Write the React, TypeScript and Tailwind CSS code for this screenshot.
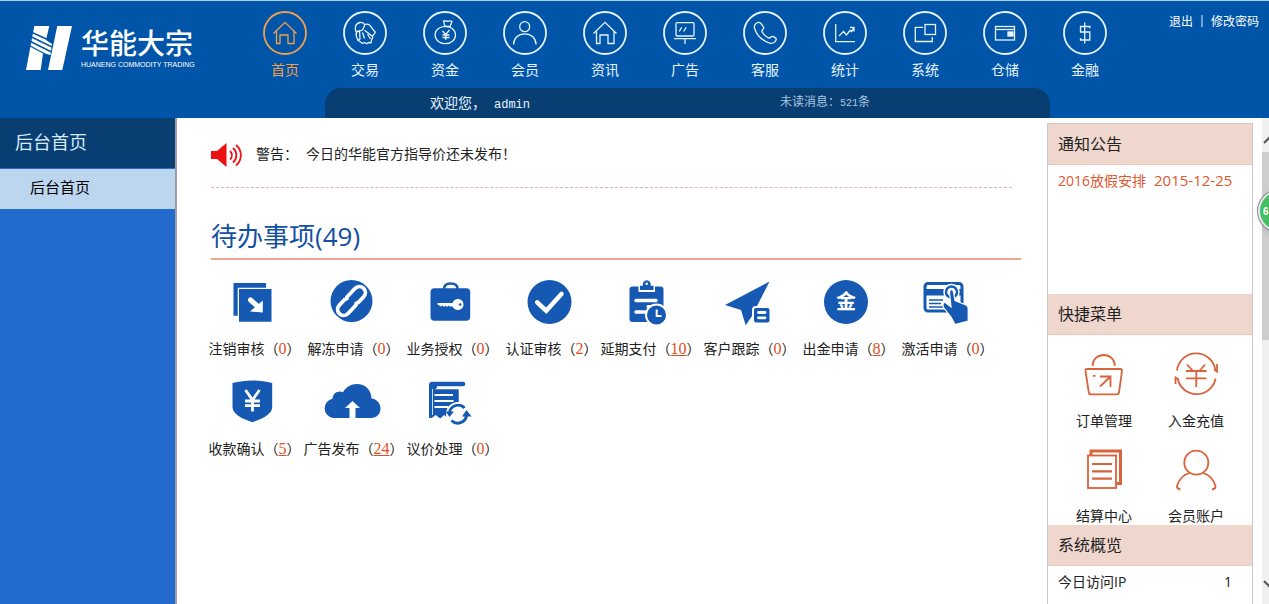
import type { ReactNode } from "react";

const NAV_ITEMS: { label: string; icon: ReactNode }[] = [
  {
    label: "首页",
    icon: <HouseShape />,
  },
  {
    label: "交易",
    icon: (
      <>
        <path d="M13 20.500c-1.500-3.500-.8-8 4-9 2.500-.3 4 .5 4.800 2.300l-2 5-4 1.500-3 .7" />
        <path d="M21.500 13.500c2-.6 4-.2 5.500 1l5.300 6.800-2.800 4-8-6M13.500 20.500l3-.5.5 8-2 1.500c-1.500-2.500-2.200-6-1.500-9z" />
        <path d="M15.500 29.500l4 3 2-1 2 1.300 2-1.300 2.500.3.500-2.500 1.500-3.500M19.500 21.500l2 6M24.500 23l3 5" />
      </>
    ),
  },
  {
    label: "资金",
    icon: (
      <>
        <path d="M20.500 10c2-.8 3.500.5 5 .2 1.500-.4 2.800-.2 3.500.3l-2 5h-5z" />
        <ellipse cx="22.300" cy="24" rx="10.200" ry="8.700" />
        <path d="M19.500 20l3.300 3.500L26.500 19M22.800 23.500V29M19.500 24h7M19.500 26.500h7" />
      </>
    ),
  },
  {
    label: "会员",
    icon: (
      <>
        <circle cx="21.700" cy="15.700" r="5" />
        <path d="M10.500 33.500c.3-6.500 4.800-10.600 11.300-10.600s11 4.100 11.300 10.600" />
      </>
    ),
  },
  {
    label: "资讯",
    icon: <HouseShape />,
  },
  {
    label: "广告",
    icon: (
      <>
        <rect x="13" y="11.700" width="18" height="13.300" rx="1" />
        <path d="M11 27.700h22M22 27.700V33M16.300 20.500l2.400-4.200M20.500 20.500l2.800-4.200" />
      </>
    ),
  },
  {
    label: "客服",
    icon: (
      <path d="M13 12.500c2-1.500 3.500-1.500 5 0l2.300 3c.8 1.300.5 2-.5 3-1.200 1-1.200 1.500-.3 3 1.500 2.500 3.500 4 5.500 5.200 1 .5 1.800.5 2.700-.5 1-1 2-1 3.200-.3l1.500 1c1.200.8.9 2 .2 3-1.500 2.400-3.300 3-6 2.300C19 29.500 13.500 23.500 11.600 17.500 11 15.500 11.500 13.800 13 12.500z" />
    ),
  },
  {
    label: "统计",
    icon: <path d="M12.700 13v17.700H32M16 25l4.500-4.500 3 3.500 3.500-4.500 1.500 1L31 17M27 16.500h4v4" />,
  },
  {
    label: "系统",
    icon: (
      <>
        <rect x="22" y="13.500" width="10.500" height="10" />
        <path d="M20 16.300h-7.700v14.200h17V26" />
      </>
    ),
  },
  {
    label: "仓储",
    icon: (
      <>
        <rect x="12.500" y="15.500" width="19" height="13.500" />
        <path d="M12.500 18.500h19" />
        <rect x="25" y="21" width="5" height="4" fill="currentColor" />
      </>
    ),
  },
  {
    label: "金融",
    icon: <path d="M21.700 11.500v21M26.800 17.500v-2h-9.300V21h9.300v8h-9.300v-2" />,
  },
];

const BLUE = "#1559b3";

const TODO_ITEMS: { label: string; count: number; icon: ReactNode }[] = [
  {
    label: "注销审核",
    count: 0,
    icon: (
      <>
        <path d="M11.500 5H44v4.700H15.700v28h-4.200z" />
        <path d="M17 11h32.500v32.700H17z" />
        <path d="M28.500 22l8 7" stroke="#fff" strokeWidth="5" strokeLinecap="round" />
        <path d="M40.800 22.500v12L28 33.500z" fill="#fff" />
      </>
    ),
  },
  {
    label: "解冻申请",
    count: 0,
    icon: (
      <>
        <circle cx="30.500" cy="23" r="21" />
        <g transform="rotate(-47 30.500 23)" fill="none" stroke="#fff" strokeWidth="3.800">
          <path d="M28 17h-9a6 6 0 0 0 0 12h11c1.500 0 2.500-1 3-2.500" />
          <path d="M33 29h9a6 6 0 0 0 0-12H31c-1.500 0-2.500 1-3 2.500" />
        </g>
      </>
    ),
  },
  {
    label: "业务授权",
    count: 0,
    icon: (
      <>
        <path d="M24 11c0-4 2.500-5.500 6.800-5.500s6.800 1.500 6.800 5.500" fill="none" stroke={BLUE} strokeWidth="2.500" />
        <rect x="10.500" y="10.300" width="39.700" height="32.400" rx="4" />
        <path
          d="M17.500 25h15c1-2.500 3-4 5.500-4 3 0 5.500 2.300 5.500 5.500S41 32 38 32c-2.500 0-4.500-1.300-5.500-3.500h-3l-1-1-1.500 1.500-1.500-1.500-1.500 1.500-1.500-1.500-1.500 1-3.500-2z"
          fill="#fff"
        />
        <circle cx="40.200" cy="26.500" r="1.300" />
      </>
    ),
  },
  {
    label: "认证审核",
    count: 2,
    icon: (
      <>
        <circle cx="30.500" cy="24" r="22" />
        <path
          d="M18.200 24.300l9 8.400 15.300-16.700"
          fill="none"
          stroke="#fff"
          strokeWidth="4.500"
          strokeLinecap="round"
        />
      </>
    ),
  },
  {
    label: "延期支付",
    count: 10,
    icon: (
      <>
        <rect x="11.500" y="8.500" width="34" height="35.500" rx="3" />
        <path d="M20.500 6.500h16.500v7.500H20.500z" fill="#fff" />
        <path d="M22 7.700h3a4 4 0 1 1 7.500 0h3V12H22z" />
        <circle cx="28.700" cy="5.800" r="1.300" fill="#fff" />
        <path
          d="M18 22.500h20M18 34h9"
          stroke="#fff"
          strokeWidth="3.500"
          strokeLinecap="round"
        />
        <path d="M30 28.500h7" stroke="#fff" strokeWidth="3" strokeLinecap="round" />
        <circle cx="38.500" cy="37" r="10.500" stroke="#fff" strokeWidth="2" />
        <path d="M38.700 31.500v6.500h4.800" fill="none" stroke="#fff" strokeWidth="2" />
      </>
    ),
  },
  {
    label: "客户跟踪",
    count: 0,
    icon: (
      <>
        <path d="M52.500 3.500L8 27l16 5 4.700 15.300L35 38z" />
        <rect x="36" y="29" width="17.500" height="16.500" rx="3" stroke="#fff" strokeWidth="2" />
        <path d="M41.500 34.500H48M41.500 39.800H48" stroke="#fff" strokeWidth="2.800" strokeLinecap="round" />
      </>
    ),
  },
  {
    label: "出金申请",
    count: 8,
    icon: (
      <>
        <circle cx="30" cy="24" r="22" />
        <text
          x="30"
          y="31"
          textAnchor="middle"
          fill="#fff"
          className="font-['Noto_Sans_CJK_SC',sans-serif] text-[20px] font-bold"
        >
          金
        </text>
      </>
    ),
  },
  {
    label: "激活申请",
    count: 0,
    icon: (
      <>
        <rect x="10" y="5.500" width="37" height="27.500" rx="3" fill="#fff" stroke={BLUE} strokeWidth="3" />
        <path d="M10 11h37v6.500H10z" />
        <path d="M14 22h14M14 25.500h12M14 29h15" stroke={BLUE} strokeWidth="1.500" />
        <circle cx="36.500" cy="14" r="7.500" stroke="#fff" strokeWidth="1.500" />
        <circle cx="36.500" cy="14" r="4.300" fill="#fff" />
        <path
          d="M34.500 14c0-3 4-3 4 0l1.500 8.500 11 4.500c1.500.8 2.200 2 2.200 3.500V43l-13.200 3.500-4-7.500-7.500-9.500c-1.500-4 .5-6 2.500-4.500l5 4z"
          stroke="#fff"
          strokeWidth="1.200"
        />
      </>
    ),
  },
  {
    label: "收款确认",
    count: 5,
    icon: (
      <>
        <path d="M10.500 5c13-3.500 27-3.500 39.700 0v24c0 6-7 11-19.700 15.200C17.500 40 10.500 35 10.500 29z" />
        <path
          d="M23.500 12l7 10 7-10M30.500 22v11.500M23 23h15M23 27.700h15"
          fill="none"
          stroke="#fff"
          strokeWidth="2.800"
        />
      </>
    ),
  },
  {
    label: "广告发布",
    count: 24,
    icon: (
      <>
        <path d="M12 40a9.800 9.800 0 0 1-.5-19.300c0-5.700 6-8.700 10.500-6.500C25 9 30 6 36 6c8 0 14.500 6 14.500 14.500 5 .5 9 4.500 9 10S55.500 40 50 40z" />
        <path d="M31.500 23l7.500 7h-4.500v10.500h-6V30H24z" fill="#fff" />
      </>
    ),
  },
  {
    label: "议价处理",
    count: 0,
    icon: (
      <>
        <path d="M12 3.700h31a2.200 2.200 0 0 1 0 4.500H17c0 2-1 3-2.500 3h24.200V41l-5-3.500-4.500 3.500-5-4-4 3.500-4.500-3.500-4 3H9V7c0-2 1-3.300 3-3.300z" />
        <path d="M14.500 17H33M14.500 23h19M14.500 29h14" stroke="#fff" strokeWidth="1.800" />
        <path d="M12.500 11v26" stroke="#fff" strokeWidth=".8" />
        <circle cx="38" cy="36" r="12" fill="#fff" />
        <path
          d="M29.500 34a8.800 8.800 0 0 1 15-4M46.500 37.500a8.800 8.800 0 0 1-15 5"
          fill="none"
          stroke={BLUE}
          strokeWidth="2.800"
        />
        <path d="M25.500 33.500h8.500l-4.500 5.500zM42 38.500h9.500L46.500 32z" />
      </>
    ),
  },
];

const SHORTCUTS: { label: string; icon: ReactNode }[] = [
  {
    label: "订单管理",
    icon: (
      <>
        <path d="M12.700 15v-1a11 10 0 0 1 22 0v1" />
        <path d="M7 18h33.500c1.200 0 1.700.8 1.500 2l-3 21.500c-.2 1.200-1 1.900-2.200 1.900H11c-1.200 0-2-.7-2.200-1.900L5.500 20c-.2-1.200.3-2 1.500-2z" />
        <path d="M20 25.500h10.500V36M30.500 25.500L20 35.500M13 24.800h2.500" />
      </>
    ),
  },
  {
    label: "入金充值",
    icon: (
      <>
        <path d="M5 19.500a19.300 19.300 0 0 1 38.300-.5M43.600 27.500a19.300 19.300 0 0 1-38-.5" />
        <path d="M45 13v7.500l-3-2M3.500 33v-6.500l3 2" />
        <path d="M15 13.500l6 6.500M33 13.500L27.500 20M14 20h20.500M14 27.300h20.500M24.300 20v16" />
      </>
    ),
  },
  {
    label: "结算中心",
    icon: (
      <>
        <path d="M11 9V5h29.500v32.500h-4" strokeWidth="3" />
        <rect x="8" y="9.500" width="28" height="32.500" />
        <path d="M12 18h20M12 25.300h20M12 32.700h20" strokeWidth="2.200" />
      </>
    ),
  },
  {
    label: "会员账户",
    icon: (
      <>
        <circle cx="24.300" cy="16.700" r="12" />
        <path d="M17.500 27C12 28.500 7 33.500 5 40c-.2 1.500 1 3 3.500 3.500M31 27c5.500 1.500 10.500 6.500 12.500 13 .2 1.500-1 3-3.500 3.500" />
      </>
    ),
  },
];

function HouseShape() {
  return <path d="M10.500 22.500L22 11.300l11.500 11.200M13.500 20.500v12H17v-8.500h8v8.500h6v-12" />;
}

function Logo() {
  return (
    <div className="flex w-[245px] shrink-0 items-start pt-[25px] pl-[26px]">
      <svg width="46" height="46" viewBox="0 0 46 46" fill="#fff" aria-hidden="true">
        <path d="M8.300 0h15L20 14l6 4-1.500 11-7.500-1.500-2.300 16.500H0z" />
        <path d="M31.300 0H46l-9.700 44H22z" />
        <path
          d="M6 6.500L27 16M5.500 11L26 21M4.500 15.500L25.500 26M4 20l20 10.500"
          stroke="#0055a8"
          strokeWidth="1.400"
        />
      </svg>
      <div className="pl-[9px] whitespace-nowrap text-white">
        <div className="text-[28px] leading-8 font-medium">华能大宗</div>
        <div className="font-['Liberation_Sans',sans-serif] text-[7px] leading-[14px]">
          HUANENG COMMODITY TRADING
        </div>
      </div>
    </div>
  );
}

function Header() {
  return (
    <header className="flex border-t border-[#a5d3f3] bg-[#0055a8] text-white">
      <Logo />
      <div className="shrink-0">
        <nav className="flex pt-2.5">
          {NAV_ITEMS.map((item, i) => (
            <a
              key={item.label}
              href="#"
              className={`flex w-20 flex-col items-center gap-1 pb-2 text-sm leading-[21px] ${
                i === 0 ? "text-[#f0a050]" : "text-[#e6f3ff]"
              }`}
            >
              <svg
                width="44"
                height="44"
                viewBox="0 0 44 44"
                fill="none"
                stroke="currentColor"
                strokeWidth="1.300"
                aria-hidden="true"
              >
                <circle cx="22" cy="22" r="21" strokeWidth="1.800" />
                {item.icon}
              </svg>
              {item.label}
            </a>
          ))}
        </nav>
        <div className="ml-20 flex h-[30px] w-[725px] items-center rounded-t-2xl bg-[#093e72] pb-0.5 pl-[105px]">
          <p className="w-[350px] text-sm text-[#e6f3ff]">
            欢迎您，
            <span className="ml-2 font-['Liberation_Mono',monospace] text-xs">admin</span>
          </p>
          <p className="text-xs text-[#a9c6e2]">
            未读消息：
            <span className="font-['Liberation_Mono',monospace] text-[10px]">521</span>条
          </p>
        </div>
      </div>
      <div className="flex flex-1 items-center justify-end gap-2 self-start pt-3 pr-2.5 text-xs whitespace-nowrap">
        <a href="#">退出</a>
        <span className="h-3 w-0.5 bg-[#6f9fd0]" />
        <a href="#">修改密码</a>
      </div>
    </header>
  );
}

function Sidebar() {
  return (
    <div className="w-[177px] shrink-0 border-r-2 border-[#999fa8] bg-[#236acd]">
      <h2 className="h-[50px] bg-[#093e72] pl-[15px] text-lg leading-[46px] text-[#d8eafa]">
        后台首页
      </h2>
      <a
        href="#"
        className="mt-px block h-10 bg-[#bcd6f0] pl-[30px] text-[15px] leading-[35px] text-black"
      >
        后台首页
      </a>
    </div>
  );
}

function TodoSection() {
  return (
    <main className="min-w-0 flex-1 pr-[26px] pl-[34px]">
      <div className="mr-[9px] flex h-[70px] items-center border-b border-dashed border-[#dfb5a6] pt-1 text-sm text-[#222]">
        <svg width="32" height="26" viewBox="0 0 32 26" fill="#ee1111" aria-hidden="true">
          <path d="M0 9h6L15.500 1v24L6 17H0z" />
          <path
            d="M19 9c2.500 2.500 2.500 6 0 8.500M22 6c4.500 4 4.500 10.500 0 14.500M25 3c6.500 5.500 6.500 15 0 20.500"
            fill="none"
            stroke="#ee1111"
            strokeWidth="1.800"
          />
        </svg>
        <p className="pb-1 pl-[13px]">
          警告：<span className="ml-2">今日的华能官方指导价还未发布！</span>
        </p>
      </div>
      <h1 className="h-[72px] border-b-2 border-[#efa592] pt-[30px] font-['Open_Sans','Noto_Sans_CJK_SC',sans-serif] text-[26px] leading-9 text-[#134fa3]">
        待办事项(49)
      </h1>
      <ul className="-mx-[9px] flex flex-wrap pt-[18px]">
        {TODO_ITEMS.map((item) => (
          <li key={item.label} className="mb-5 flex w-[99px] flex-col items-center">
            <svg width="60" height="48" viewBox="0 0 60 48" fill={BLUE} aria-hidden="true">
              {item.icon}
            </svg>
            <p className="mt-3 pl-1.5 text-sm leading-5 whitespace-nowrap text-[#222]">
              {item.label}（
              <a
                href="#"
                className={`font-['Liberation_Serif',serif] text-base leading-none text-[#e04e22] ${
                  [5, 8, 10, 24].includes(item.count) ? "underline" : ""
                }`}
              >
                {item.count}
              </a>
              ）
            </p>
          </li>
        ))}
      </ul>
    </main>
  );
}

function PanelTitle({ children }: { children: ReactNode }) {
  return (
    <h2 className="h-[41px] border-b border-dotted border-[#e3bdb0] bg-[#f0d7ce] pl-2.5 text-base leading-[38px] text-[#222]">
      {children}
    </h2>
  );
}

function RightPanel() {
  return (
    <aside className="mt-[5px] w-[206px] shrink-0 border border-b-0 border-[#c8c8c8]">
      <PanelTitle>通知公告</PanelTitle>
      <div className="h-[129px] pt-[5px] pl-2.5">
        <a
          href="#"
          className="flex items-baseline gap-2 font-['Open_Sans','Noto_Sans_CJK_SC',sans-serif] text-sm leading-5 whitespace-nowrap text-[#e0562f]"
        >
          <span>2016放假安排</span>
          <span className="text-[15px]">2015-12-25</span>
        </a>
      </div>
      <PanelTitle>快捷菜单</PanelTitle>
      <div className="grid grid-cols-2 px-2.5">
        {SHORTCUTS.map((item) => (
          <a
            key={item.label}
            href="#"
            className="flex flex-col items-center gap-3 pt-4 text-sm leading-[19px] text-[#222]"
          >
            <svg
              width="48"
              height="48"
              viewBox="0 0 48 48"
              fill="none"
              stroke="#d9633a"
              strokeWidth="1.800"
              aria-hidden="true"
            >
              {item.icon}
            </svg>
            {item.label}
          </a>
        ))}
      </div>
      <PanelTitle>系统概览</PanelTitle>
      <p className="flex justify-between pt-1.5 pr-5 pl-2.5 font-['Open_Sans','Noto_Sans_CJK_SC',sans-serif] text-sm leading-5 text-[#222]">
        <span>今日访问IP</span>
        <span>1</span>
      </p>
    </aside>
  );
}

function ScrollTrack() {
  return (
    <div className="relative ml-[9px] flex w-[7px] shrink-0 flex-col bg-[#f0f0f0]">
      <svg className="mt-[18px] mb-2" width="7" height="8" viewBox="0 0 7 8" fill="none" aria-hidden="true">
        <path d="M2 7l6-6" stroke="#555" strokeWidth="2" />
      </svg>
      <div className="h-[188px] bg-[#cdcdcd]" />
      <svg className="mt-auto mb-4" width="7" height="8" viewBox="0 0 7 8" fill="none" aria-hidden="true">
        <path d="M2 1l6 6" stroke="#555" strokeWidth="2" />
      </svg>
      {/* floating speed ball, half outside the window */}
      <div className="absolute top-[72px] -left-[4px] flex size-[42px] items-center rounded-full border-2 border-[#e8e8e8] bg-[#45bf63] pl-[3px] font-['Liberation_Sans',sans-serif] text-[10px] font-bold text-white shadow-md ring-1 ring-[#8a8a8a]">
        6
      </div>
    </div>
  );
}

export default function App() {
  return (
    <div className="flex min-h-screen flex-col overflow-hidden bg-white font-['Noto_Sans_CJK_SC',sans-serif]">
      <Header />
      <div className="flex flex-1">
        <Sidebar />
        <TodoSection />
        <RightPanel />
        <ScrollTrack />
      </div>
    </div>
  );
}
